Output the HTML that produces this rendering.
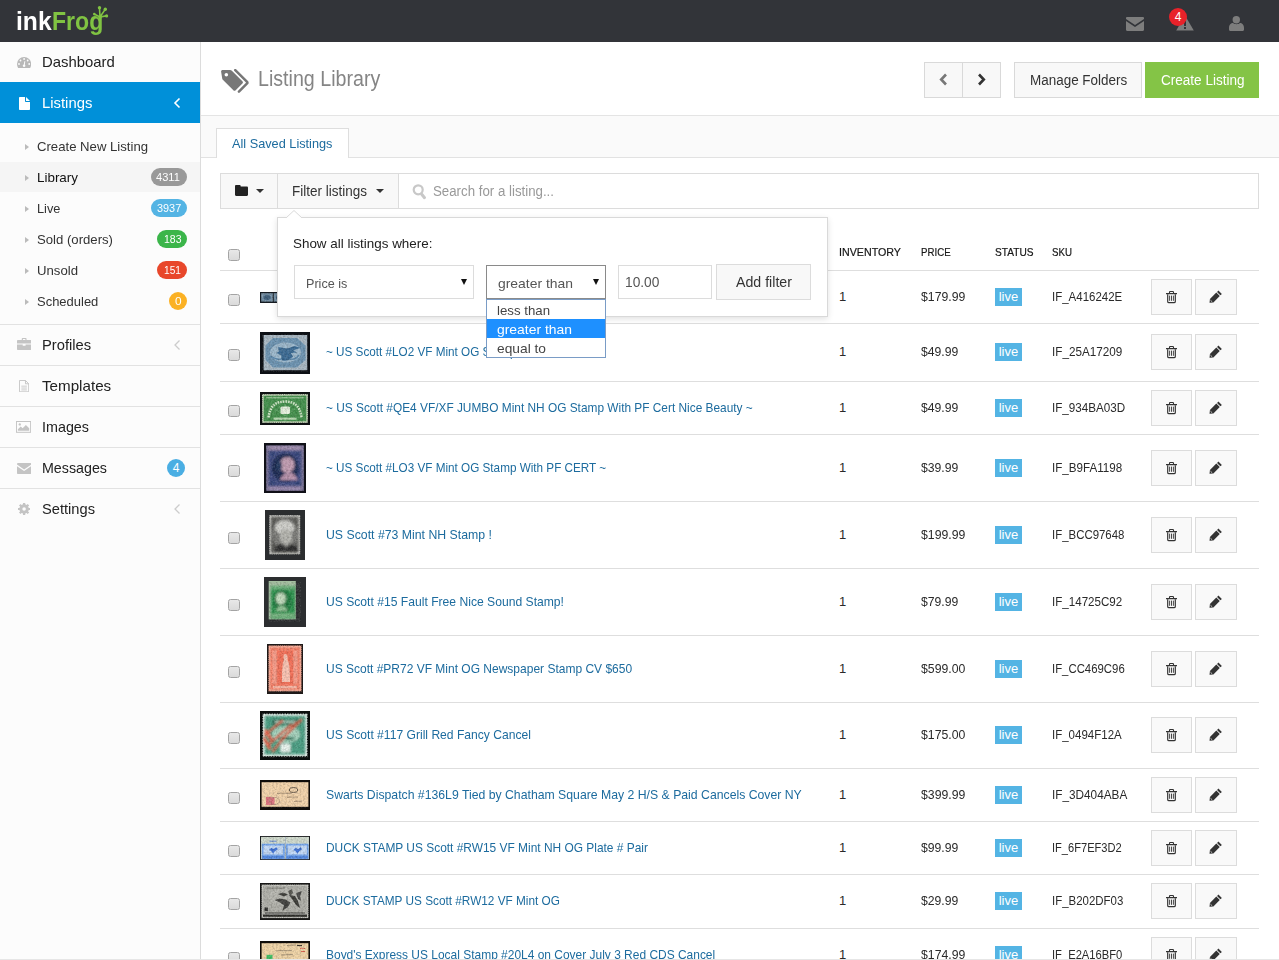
<!DOCTYPE html>
<html lang="en"><head><meta charset="utf-8"><title>inkFrog - Listing Library</title>
<style>
*{box-sizing:border-box}
html,body{margin:0;padding:0}
body{width:1279px;height:960px;overflow:hidden;background:#fff;font-family:"Liberation Sans",sans-serif;font-size:13px;color:#333;position:relative}
a{text-decoration:none;color:#1c6b9e}
#top{position:absolute;left:0;top:0;width:1279px;height:42px;background:#323439}
#logo{position:absolute;left:16.400px;top:5.500px;font-size:25px;font-weight:bold;line-height:30px;color:#fff;white-space:nowrap}
#logo b{color:#80c342}
#foot{position:absolute;left:91px;top:5px}
.ticon{position:absolute}
#tbadge{position:absolute;left:1169px;top:8px;width:18px;height:18px;border-radius:9px;background:#e8222a;color:#fff;font-size:12px;line-height:18px;text-align:center}
#side{position:absolute;left:0;top:42px;width:201px;height:918px;background:#fcfcfc;border-right:1px solid #dcdcdc}
.mi{position:absolute;left:0;width:200px;height:41px;border-top:1px solid #e2e2e2;font-size:14.5px;line-height:40px;color:#222;padding-left:42px}
.mi svg{position:absolute}
.mi.act{background:#0090d9;color:#fff;border-top:0}
.chev{position:absolute;left:173px;top:14px}
.sub{position:absolute;left:0;width:200px;height:31px;font-size:13px;line-height:31px;color:#333;padding-left:37px}
.sub:before{content:"";position:absolute;left:25px;top:12.500px;border-left:4px solid #bbb;border-top:3.5px solid transparent;border-bottom:3.5px solid transparent}
.sub.on{background:#f5f5f5;color:#111;height:30px}
.bdg{position:absolute;right:13px;top:6px;height:18px;border-radius:9px;color:#fff;font-size:11.5px;line-height:18px;text-align:left}
#main{position:absolute;left:201px;top:42px;width:1078px;height:918px}
#ptitle{position:absolute;left:57px;top:20px;font-size:22.5px;line-height:33px;color:#858585;white-space:nowrap}
#band{position:absolute;left:0;top:73px;width:1078px;height:43px;background:#fafafa;border-top:1px solid #e4e4e4;border-bottom:1px solid #e2e2e2}
#tab{position:absolute;left:15px;top:12px;width:133px;height:30px;background:#fff;border:1px solid #dedede;border-bottom:0;font-size:13px;line-height:30px;padding-left:15px;color:#1c6b9e}
.hbtn{position:absolute;top:20px;height:36px;border:1px solid #d9d9d9;background:#f8f8f8;font-size:14px;line-height:34px;text-align:center;color:#333}
#tool{position:absolute;left:19px;top:131px;width:1039px;height:36px;border:1px solid #dcdcdc;background:#fff}
#tool .seg{position:absolute;top:0;height:34px;background:#f8f8f8;border-right:1px solid #dcdcdc;font-size:14px;line-height:34px;color:#333}
.car{display:inline-block;border-top:4px solid #333;border-left:4px solid transparent;border-right:4px solid transparent;vertical-align:middle}
#tbl{position:absolute;left:220px;top:0;width:1039px}
#thead{position:absolute;left:220px;top:232px;width:1039px;height:39px}
#thead span.h{position:absolute;top:13px;font-size:11px;line-height:14px;color:#111;-webkit-text-stroke:.2px #222}
.row{position:absolute;left:0;width:1039px;border-top:1px solid #dedede}
.row>*{position:absolute}
.cb{left:8px;width:12px;height:12px;border:1px solid #a4a4a4;border-radius:2.500px;background:linear-gradient(#e8e8e8,#dadada)}
.thumb{display:block;line-height:0}
.ttl{left:106px;font-size:13px;line-height:20px;white-space:nowrap}
.inv{left:619px;line-height:20px;color:#2a2a2a}
.prc{left:701px;line-height:20px;color:#2a2a2a}
.sku{left:832px;line-height:20px;color:#2a2a2a}
.live{left:775px;width:27px;height:18px;background:#54b4e4;color:#fff;font-size:13px;line-height:17px;text-align:center}
.btn{width:41px;height:36px;border:1px solid #dcdcdc;background:#f9f9f9}
.btn svg{position:absolute;left:14px;top:10.500px}
.btn.edit svg{left:13.300px;top:9.700px}
.btn.trash{left:931px}
.btn.edit{left:975px;width:42px}
#pop{position:absolute;left:277px;top:217px;width:551px;height:100px;background:#fff;border:1px solid #d9d9d9;box-shadow:0 2px 6px rgba(0,0,0,.12)}
#pop .lbl{position:absolute;left:15px;top:16px;font-size:13px;line-height:20px;color:#222}
.sel{position:absolute;height:34px;border:1px solid #dcdcdc;background:#fff;font-size:13.5px;line-height:35px;color:#555;padding-left:11px}
.sel i{position:absolute;right:6.500px;top:12.500px;border-top:6.500px solid #111;border-left:3px solid transparent;border-right:3px solid transparent}
#dd{position:absolute;left:486px;top:299px;width:120px;height:59px;background:#fff;border:1px solid #7a9cc6;font-size:13.5px;color:#444}
#dd div{height:19px;line-height:21px;padding-left:10px}
#dd div.hl{background:#1e90ff;color:#fff}

span[id]{display:inline-block;transform-origin:0 50%;white-space:nowrap}

</style></head>
<body>
<svg width="0" height="0" style="position:absolute"><defs><filter id="nzd" x="0" y="0" width="100%" height="100%"><feTurbulence type="fractalNoise" baseFrequency=".55" numOctaves="2" seed="4"/><feColorMatrix type="matrix" values="0 0 0 0 0 0 0 0 0 0 0 0 0 0 0 0 0 0 2.400 -.9"/></filter><filter id="nzl" x="0" y="0" width="100%" height="100%"><feTurbulence type="fractalNoise" baseFrequency=".6" numOctaves="2" seed="11"/><feColorMatrix type="matrix" values="0 0 0 0 1 0 0 0 0 1 0 0 0 0 1 0 0 0 2.400 -.9"/></filter></defs></svg>
<div id="top">
 <div id="logo"><span id="lg1" style="transform:scaleX(0.985)">ink</span><b style="position:absolute;left:35.400px;top:0"><span id="lg2" style="transform:scaleX(0.922)">Frog</span></b></div>
 <svg id="foot" width="20" height="22" viewBox="0 0 20 22"><g stroke="#80c342" stroke-width="1.600" stroke-linecap="round" fill="none"><path d="M9 12L3.600 9.300M9 12L8.500 3.200M9 12L14 4.600M9 12L15.200 10.900"/></g><g fill="#80c342"><circle cx="3.300" cy="9.100" r="1.300"/><circle cx="8.500" cy="2.800" r="1.700"/><circle cx="14.300" cy="4.200" r="1.700"/><circle cx="15.600" cy="10.900" r="1.600"/><circle cx="9" cy="12.200" r="1.600"/></g></svg>
 <svg class="ticon" style="left:1126px;top:17px" width="18" height="14" viewBox="0 0 18 14"><path d="M0 1.2C0 .5.5 0 1.2 0h15.6c.7 0 1.2.5 1.2 1.2V2L9 8 0 2zM0 4l9 6 9-6v8.8c0 .7-.5 1.2-1.2 1.2H1.200C.5 14 0 13.500 0 12.800z" fill="#7d7d7d"/></svg>
 <svg class="ticon" style="left:1176px;top:15px" width="18" height="16" viewBox="0 0 18 16"><path d="M9 .5L17.800 15.500H.2z" fill="#7d7d7d"/><path d="M8 6h2v5H8zM8 12h2v2H8z" fill="#323439"/></svg>
 <div id="tbadge">4</div>
 <svg class="ticon" style="left:1229px;top:15px" width="15" height="16" viewBox="0 0 15 16"><circle cx="7.300" cy="4.800" r="3.700" fill="#7d7d7d"/><path d="M0 13c0-3.500 2-5 4-5 1 .8 2 1.200 3.500 1.200S10 8.800 11 8c2 0 4 1.500 4 5v1.500c0 .9-.6 1.500-1.500 1.500h-12C.6 16 0 15.400 0 14.500z" fill="#7d7d7d"/></svg>
</div>
<div id="side">
 <div class="mi" style="top:0;border-top:0">
  <svg style="left:17px;top:15px" width="14.200" height="11.200" viewBox="0 0 14.200 11.200"><path d="M7.100 0A7.100 7.100 0 0 0 0 7.100c0 1.500.4 2.900 1.200 4.100h11.800c.8-1.200 1.200-2.600 1.200-4.100A7.100 7.100 0 0 0 7.100 0z" fill="#b9b9b9"/><g fill="#fcfcfc"><circle cx="7.100" cy="2" r=".9"/><circle cx="3.500" cy="3.500" r=".9"/><circle cx="10.700" cy="3.500" r=".9"/><circle cx="2" cy="7" r=".9"/><circle cx="12.200" cy="7" r=".9"/><circle cx="7.100" cy="8.800" r="1.300"/></g><path d="M7.800 4.300L7.200 8.500" stroke="#fcfcfc" stroke-width="1"/></svg><span id="m_dash" style="transform:scaleX(1.026)">Dashboard</span></div>
 <div class="mi act" style="top:40px;height:41px;line-height:42px">
  <svg style="left:19px;top:15px" width="11" height="13" viewBox="0 0 11 13"><path d="M0 .8C0 .3.300 0 .8 0H6v4.200c0 .5.300.8.800.8H11v7.200c0 .5-.300.800-.8.800H.8C.3 13 0 12.700 0 12.200zM7 0l4 4H7z" fill="#fff"/></svg><span id="m_list" style="transform:scaleX(1.023)">Listings</span>
  <svg class="chev" style="top:15px" width="8" height="12" viewBox="0 0 8 12"><path d="M6.500 1.500L2 6l4.500 4.500" stroke="#fff" stroke-width="1.600" fill="none"/></svg></div>
 <div class="sub" style="top:89px"><span id="s_cnl" style="transform:scaleX(1.011)">Create New Listing</span></div>
 <div class="sub on" style="top:120px"><span id="s_lib" style="transform:scaleX(1.031)">Library</span><span class="bdg" style="background:#999;width:36px;padding-left:5.300px"><span id="bd1" style="transform:scaleX(0.962)">4311</span></span></div>
 <div class="sub" style="top:151px"><span id="s_live" style="transform:scaleX(0.981)">Live</span><span class="bdg" style="background:#54b4e4;width:36px;padding-left:5.600px"><span id="bd2" style="transform:scaleX(0.946)">3937</span></span></div>
 <div class="sub" style="top:182px"><span id="s_sold" style="transform:scaleX(1.011)">Sold (orders)</span><span class="bdg" style="background:#3bb54a;width:30px;padding-left:6.600px"><span id="bd3" style="transform:scaleX(0.912)">183</span></span></div>
 <div class="sub" style="top:213px"><span id="s_uns" style="transform:scaleX(1.013)">Unsold</span><span class="bdg" style="background:#e8472b;width:30px;padding-left:6.600px"><span id="bd4" style="transform:scaleX(0.881)">151</span></span></div>
 <div class="sub" style="top:244px"><span id="s_sch" style="transform:scaleX(0.998)">Scheduled</span><span class="bdg" style="background:#fbb124;width:18px;padding-left:5.600px"><span id="bd5" style="transform:scaleX(1.03)">0</span></span></div>
 <div class="mi" style="top:282px">
  <svg style="left:17px;top:13px" width="14.300" height="12" viewBox="0 0 15 13" preserveAspectRatio="none"><path d="M5 2.200V.8C5 .3 5.300 0 5.800 0h3.400c.5 0 .8.300.8.800v1.400h4.200c.5 0 .8.300.8.800V6H0V3c0-.5.300-.8.800-.8zM6.200 1.200v1h2.600v-1zM0 7h6v1.300h3V7h6v5.200c0 .5-.300.800-.8.800H.8C.3 13 0 12.700 0 12.200z" fill="#c4c4c4"/></svg><span id="m_prof" style="transform:scaleX(1.017)">Profiles</span>
  <svg class="chev" width="8" height="12" viewBox="0 0 8 12"><path d="M6.500 1.500L2 6l4.500 4.500" stroke="#ccc" stroke-width="1.300" fill="none"/></svg></div>
 <div class="mi" style="top:323px">
  <svg style="left:19px;top:13.700px" width="10.200" height="12.300" viewBox="0 0 11 13" preserveAspectRatio="none"><path d="M.5.500h6.500L10.500 4v8.500H.5z M7 .5V4h3.500" stroke="#c4c4c4" stroke-width="1" fill="none"/><path d="M2.500 6.500h6M2.500 8.500h6M2.500 10.500h6" stroke="#c4c4c4" stroke-width=".9"/></svg><span id="m_tmpl" style="transform:scaleX(1.047)">Templates</span></div>
 <div class="mi" style="top:364px">
  <svg style="left:16px;top:14px" width="15.100" height="11.800" viewBox="0 0 16 12" preserveAspectRatio="none"><rect x=".5" y=".5" width="15" height="11" fill="none" stroke="#c4c4c4"/><path d="M2 10V8.500L5 5.500l2 2L10.500 4 14 7.500V10z" fill="#c4c4c4"/><circle cx="4" cy="3.500" r="1.200" fill="#c4c4c4"/></svg><span id="m_img" style="transform:scaleX(0.988)">Images</span></div>
 <div class="mi" style="top:405px">
  <svg style="left:17px;top:15px" width="14.200" height="11" viewBox="0 0 15 11" preserveAspectRatio="none"><path d="M0 1C0 .4.400 0 1 0h13c.6 0 1 .4 1 1v.6L7.500 6.500 0 1.600zM0 3.200l7.500 4.900L15 3.200V10c0 .6-.4 1-1 1H1c-.6 0-1-.4-1-1z" fill="#c4c4c4"/></svg><span id="m_msg" style="transform:scaleX(0.983)">Messages</span>
  <span class="bdg" style="background:#4aaee3;right:15px;top:11px;width:18px;font-size:12px;text-align:center">4</span></div>
 <div class="mi" style="top:446px">
  <svg style="left:18px;top:14.200px" width="12.200" height="12" viewBox="0 0 13 13" preserveAspectRatio="none"><circle cx="6.500" cy="6.500" r="3.600" fill="none" stroke="#c4c4c4" stroke-width="3"/><g stroke="#c4c4c4" stroke-width="2.400"><path d="M6.500 0v13M0 6.500h13M1.900 1.900l9.200 9.200M11.100 1.900l-9.200 9.200"/></g><circle cx="6.500" cy="6.500" r="1.900" fill="#fcfcfc"/></svg><span id="m_set" style="transform:scaleX(1.011)">Settings</span>
  <svg class="chev" width="8" height="12" viewBox="0 0 8 12"><path d="M6.500 1.500L2 6l4.500 4.500" stroke="#ccc" stroke-width="1.300" fill="none"/></svg></div>
</div>
<div id="main">
 <svg style="position:absolute;left:19px;top:26.500px" width="30.500" height="25.200" viewBox="0 0 29 24"><path d="M1 2.500C1 1.600 1.600 1 2.500 1H9.500c.8 0 1.400.3 2 .9L21.300 11.700c.7.700.7 1.500 0 2.200l-6.400 6.400c-.7.700-1.500.7-2.200 0L2.900 10.500C2.300 9.900 2 9.300 2 8.500z" fill="#777"/><circle cx="6" cy="5.500" r="1.700" fill="#fff"/><path d="M14.500 1L25.800 12.300c.4.400.4 1 0 1.400L18 21.500" stroke="#777" stroke-width="2.400" fill="none" stroke-linecap="round"/></svg>
 <div id="ptitle"><span id="ptl" style="transform:scaleX(0.873)">Listing Library</span></div>
 <div class="hbtn" style="left:723px;width:39px"><svg style="margin-top:10px" width="9" height="13" viewBox="0 0 9 13"><path d="M7 1.500L2.200 6.500 7 11.500" stroke="#777" stroke-width="2.600" fill="none"/></svg></div>
 <div class="hbtn" style="left:761px;width:39px"><svg style="margin-top:10px" width="9" height="13" viewBox="0 0 9 13"><path d="M2 1.500L6.800 6.500 2 11.500" stroke="#333" stroke-width="2.600" fill="none"/></svg></div>
 <div class="hbtn" style="left:813px;width:128px;text-align:left;padding-left:14.5px"><span id="b_mf" style="transform:scaleX(0.961)">Manage Folders</span></div>
 <div class="hbtn" style="left:944px;width:114px;background:#84c446;border-color:#84c446;color:#fff;text-align:left;padding-left:14.5px"><span id="b_cl" style="transform:scaleX(0.967)">Create Listing</span></div>
 <div id="band"><div id="tab"><span id="tab1" style="transform:scaleX(0.979)">All Saved Listings</span></div></div>
 <div id="tool">
  <div class="seg" style="left:0;width:57px"><svg style="position:absolute;left:14px;top:11px" width="13" height="11" viewBox="0 0 13 11"><path d="M0 1.200C0 .5.500 0 1.200 0h3.300c.7 0 1.200.5 1.200 1.200V1.500h6.100c.7 0 1.200.5 1.200 1.200v7.100c0 .7-.5 1.200-1.200 1.200H1.200C.5 11 0 10.500 0 9.800z" fill="#222"/></svg><span class="car" style="position:absolute;left:35px;top:15px"></span></div>
  <div class="seg" style="left:57px;width:121px;padding-left:14px"><span id="f_fl" style="transform:scaleX(0.964)">Filter listings</span><span class="car" style="position:absolute;left:97.500px;top:15px"></span></div>
  <svg style="position:absolute;left:190.500px;top:9.500px" width="15" height="16" viewBox="0 0 15 16"><circle cx="6.200" cy="5.800" r="4.500" fill="none" stroke="#c8c8c8" stroke-width="2.200"/><path d="M9.700 10.200l2.800 3.500" stroke="#c8c8c8" stroke-width="3" stroke-linecap="round"/></svg>
  <div style="position:absolute;left:212px;top:0;font-size:14px;line-height:34px;color:#999"><span id="f_sr" style="transform:scaleX(0.948)">Search for a listing...</span></div>
 </div>
</div>
<div id="thead">
 <span class="cb" style="position:absolute;top:17px"></span>
 <span class="h" style="left:619px"><span id="h_inv" style="transform:scaleX(0.972)">INVENTORY</span></span>
 <span class="h" style="left:701px"><span id="h_prc" style="transform:scaleX(0.88)">PRICE</span></span>
 <span class="h" style="left:775px"><span id="h_sta" style="transform:scaleX(0.922)">STATUS</span></span>
 <span class="h" style="left:832px"><span id="h_sku" style="transform:scaleX(0.884)">SKU</span></span>
</div>
<div id="tbl">
<div class="row" style="top:270px;height:53px">
 <span class="cb" style="top:23px"></span>
 <span class="thumb" style="left:40px;top:21px;width:50px;height:11px"><svg width="50" height="11" viewBox="0 0 50 11"><filter id="b1" x="-20%" y="-20%" width="140%" height="140%"><feGaussianBlur stdDeviation="0.5"/></filter><rect width="50" height="11" fill="#161c22"/><rect x="1.2" y="1.2" width="11.6" height="8.4" fill="#7590a5"/><rect x="13.8" y="1.2" width="11.6" height="8.4" fill="#7590a5"/><rect x="26.4" y="1.2" width="11" height="8.400" fill="#7590a5"/><rect x="38.400" y="1.200" width="10.400" height="8.400" fill="#7590a5"/><g filter="url(#b1)"><ellipse cx="7" cy="5.4" rx="3.6" ry="2.6" fill="#3f607c"/><ellipse cx="19.6" cy="5.400" rx="3.600" ry="2.600" fill="#3f607c"/><ellipse cx="32" cy="5.400" rx="3.600" ry="2.600" fill="#3f607c"/><ellipse cx="43.500" cy="5.400" rx="3.600" ry="2.600" fill="#3f607c"/></g><rect x="1.2" y="1.2" width="47.6" height="8.6" filter="url(#nzd)" opacity=".16"/><rect x="1.2" y="1.2" width="47.6" height="8.6" filter="url(#nzl)" opacity=".13"/></svg></span>
 <span class="inv" style="top:16px">1</span>
 <span class="prc" style="top:16px"><span id="pr1" style="transform:scaleX(0.943)">$179.99</span></span>
 <span class="live" style="top:17px">live</span>
 <span class="sku" style="top:16px"><span id="sk1" style="transform:scaleX(0.884)">IF_A416242E</span></span>
 <span class="btn trash" style="top:8px"><svg width="11" height="13" viewBox="0 0 11 13"><path d="M3.500 2.300V1.300c0-.5.300-.8.800-.8h2.400c.5 0 .8.300.8.800v1" stroke="#333" stroke-width="1.100" fill="none"/><path d="M.3 2.700h10.400" stroke="#333" stroke-width="1.300" fill="none" stroke-linecap="round"/><path d="M1.700 3.200v7.200c0 .8.500 1.300 1.300 1.300h5c.8 0 1.300-.5 1.300-1.300V3.200" stroke="#333" stroke-width="1.200" fill="none"/><path d="M3.600 4.600v5.200M5.500 4.600v5.200M7.400 4.600v5.200" stroke="#333" stroke-width=".9" fill="none"/></svg></span>
 <span class="btn edit" style="top:8px"><svg width="13.600" height="13.600" viewBox="0 0 13 13"><path d="M9 .5l3.300 3.300-1.300 1.300-3.300-3.300zM7 2.500l3.300 3.300-6.100 6.100-3.700.4.400-3.700z" fill="#333"/><path d="M1.400 9.700l1.700 1.700" stroke="#f9f9f9" stroke-width=".7"/><path d="M8.300 2.500l2 2" stroke="#777" stroke-width=".5"/></svg></span>
</div>
<div class="row" style="top:323px;height:58px">
 <span class="cb" style="top:25px"></span>
 <span class="thumb" style="left:40px;top:8px;width:50px;height:42px"><svg width="50" height="42" viewBox="0 0 50 42"><filter id="b2" x="-20%" y="-20%" width="140%" height="140%"><feGaussianBlur stdDeviation="0.7"/></filter><clipPath id="c2"><rect x="3.6" y="3" width="43.6" height="35.2"/></clipPath><rect width="50" height="42" fill="#0d1015"/><rect x="3.600" y="3" width="43.600" height="35.200" fill="#a9b8c3"/><g filter="url(#b2)" clip-path="url(#c2)"><path d="M13 6h24l8.500 7.500v14.500l-8.500 7.500H13l-7.500-7.500V13.500z" fill="#6c93b1"/><ellipse cx="25.500" cy="20.500" rx="15.500" ry="10" fill="#9cb8cc"/><path d="M18 15l9 1.500 8-2.500 5 2-7 2.500 4 2-6 .5 2 3.500-3 3-5 1.500-4-1 .5-4.500-5-2.500 2.500-1.500z" fill="#3a6a93"/><path d="M10 24c5 3 8 4 12 3M30 27c4 1 7-1 9-4" stroke="#5a86a9" stroke-width="1.500" fill="none"/></g><rect x="2" y="2" width="46" height="38" filter="url(#nzd)" opacity=".16"/><rect x="2" y="2" width="46" height="38" filter="url(#nzl)" opacity=".13"/></svg></span>
 <a class="ttl" style="top:18px"><span id="tt2" style="transform:scaleX(0.901)">~ US Scott #LO2 VF Mint OG Stamp With PF CERT ~</span></a>
 <span class="inv" style="top:18px">1</span>
 <span class="prc" style="top:18px"><span id="pr2" style="transform:scaleX(0.938)">$49.99</span></span>
 <span class="live" style="top:19px">live</span>
 <span class="sku" style="top:18px"><span id="sk2" style="transform:scaleX(0.9)">IF_25A17209</span></span>
 <span class="btn trash" style="top:10px"><svg width="11" height="13" viewBox="0 0 11 13"><path d="M3.500 2.300V1.300c0-.5.300-.8.800-.8h2.400c.5 0 .8.300.8.800v1" stroke="#333" stroke-width="1.100" fill="none"/><path d="M.3 2.700h10.400" stroke="#333" stroke-width="1.300" fill="none" stroke-linecap="round"/><path d="M1.700 3.200v7.200c0 .8.500 1.300 1.300 1.300h5c.8 0 1.300-.5 1.300-1.300V3.200" stroke="#333" stroke-width="1.200" fill="none"/><path d="M3.600 4.600v5.200M5.500 4.600v5.200M7.400 4.600v5.200" stroke="#333" stroke-width=".9" fill="none"/></svg></span>
 <span class="btn edit" style="top:10px"><svg width="13.600" height="13.600" viewBox="0 0 13 13"><path d="M9 .5l3.300 3.300-1.300 1.300-3.300-3.300zM7 2.500l3.300 3.300-6.100 6.100-3.700.4.400-3.700z" fill="#333"/><path d="M1.400 9.700l1.700 1.700" stroke="#f9f9f9" stroke-width=".7"/><path d="M8.300 2.500l2 2" stroke="#777" stroke-width=".5"/></svg></span>
</div>
<div class="row" style="top:381px;height:53px">
 <span class="cb" style="top:23px"></span>
 <span class="thumb" style="left:40px;top:10px;width:50px;height:33px"><svg width="50" height="33" viewBox="0 0 50 33"><filter id="b3" x="-20%" y="-20%" width="140%" height="140%"><feGaussianBlur stdDeviation="0.55"/></filter><rect width="50" height="33" fill="#0f1213"/><rect x="2" y="2" width="46" height="29" fill="#c3d4b6" stroke="#0f1213" stroke-width=".8" stroke-dasharray="1 1.100"/><rect x="3.700" y="3.700" width="42.600" height="25.600" fill="#43904b"/><g filter="url(#b3)"><rect x="6" y="5" width="38" height="1.400" fill="#8fc08e"/><path d="M8.500 25.500C10 13.500 16 9.500 25 9.500s15 4 16.500 16" stroke="#cfe6c6" stroke-width="2.600" fill="none" stroke-dasharray="1.700 .9"/><path d="M25 24l-10-7M25 24l-6-10M25 24V12M25 24l6-10M25 24l10-7" stroke="#6fb072" stroke-width=".7"/><rect x="20.500" y="14.500" width="9.500" height="7.500" rx="1.500" fill="#e6f2de"/><rect x="13.500" y="25.600" width="23" height="2.200" fill="#b5d8ae"/></g><rect x="2" y="2" width="46" height="29" filter="url(#nzd)" opacity=".16"/><rect x="2" y="2" width="46" height="29" filter="url(#nzl)" opacity=".13"/></svg></span>
 <a class="ttl" style="top:16px"><span id="tt3" style="transform:scaleX(0.913)">~ US Scott #QE4 VF/XF JUMBO Mint NH OG Stamp With PF Cert Nice Beauty ~</span></a>
 <span class="inv" style="top:16px">1</span>
 <span class="prc" style="top:16px"><span id="pr3" style="transform:scaleX(0.938)">$49.99</span></span>
 <span class="live" style="top:17px">live</span>
 <span class="sku" style="top:16px"><span id="sk3" style="transform:scaleX(0.897)">IF_934BA03D</span></span>
 <span class="btn trash" style="top:8px"><svg width="11" height="13" viewBox="0 0 11 13"><path d="M3.500 2.300V1.300c0-.5.300-.8.800-.8h2.400c.5 0 .8.300.8.800v1" stroke="#333" stroke-width="1.100" fill="none"/><path d="M.3 2.700h10.400" stroke="#333" stroke-width="1.300" fill="none" stroke-linecap="round"/><path d="M1.700 3.200v7.200c0 .8.500 1.300 1.300 1.300h5c.8 0 1.300-.5 1.300-1.300V3.200" stroke="#333" stroke-width="1.200" fill="none"/><path d="M3.600 4.600v5.200M5.500 4.600v5.200M7.400 4.600v5.200" stroke="#333" stroke-width=".9" fill="none"/></svg></span>
 <span class="btn edit" style="top:8px"><svg width="13.600" height="13.600" viewBox="0 0 13 13"><path d="M9 .5l3.300 3.300-1.300 1.300-3.300-3.300zM7 2.500l3.300 3.300-6.100 6.100-3.700.4.400-3.700z" fill="#333"/><path d="M1.400 9.700l1.700 1.700" stroke="#f9f9f9" stroke-width=".7"/><path d="M8.300 2.500l2 2" stroke="#777" stroke-width=".5"/></svg></span>
</div>
<div class="row" style="top:434px;height:67px">
 <span class="cb" style="top:30px"></span>
 <span class="thumb" style="left:44px;top:8px;width:42px;height:50px"><svg width="42" height="50" viewBox="0 0 42 50"><filter id="b4" x="-20%" y="-20%" width="140%" height="140%"><feGaussianBlur stdDeviation="0.8"/></filter><clipPath id="c4"><rect x="2.2" y="2.4" width="37.6" height="45.4"/></clipPath><rect width="42" height="50" fill="#101018"/><rect x="2.200" y="2.400" width="37.600" height="45.400" fill="#7d7398"/><g clip-path="url(#c4)"><g filter="url(#b4)"><rect x="4.500" y="7.500" width="33" height="36" fill="#3f4b82"/><rect x="5" y="3.400" width="32" height="3.200" fill="#a793b3"/><rect x="5" y="43.800" width="32" height="3" fill="#a08fb2"/><ellipse cx="21.200" cy="24.800" rx="13.600" ry="14.200" fill="#1c2c53"/><ellipse cx="23.200" cy="22" rx="7.400" ry="8" fill="#c09bb0"/><path d="M16 37c2-6 8-9 14-6l4 6z" fill="#b892ab"/><ellipse cx="15.200" cy="23" rx="2.600" ry="6" fill="#24375f"/><circle cx="8.500" cy="11" r="2.200" fill="#2e3f73"/><circle cx="33.500" cy="11" r="2.200" fill="#2e3f73"/><circle cx="8.500" cy="40" r="2.200" fill="#2e3f73"/><circle cx="33.500" cy="40" r="2.200" fill="#2e3f73"/></g></g><rect x="2" y="2" width="38" height="46" filter="url(#nzd)" opacity=".16"/><rect x="2" y="2" width="38" height="46" filter="url(#nzl)" opacity=".13"/></svg></span>
 <a class="ttl" style="top:23px"><span id="tt4" style="transform:scaleX(0.901)">~ US Scott #LO3 VF Mint OG Stamp With PF CERT ~</span></a>
 <span class="inv" style="top:23px">1</span>
 <span class="prc" style="top:23px"><span id="pr4" style="transform:scaleX(0.938)">$39.99</span></span>
 <span class="live" style="top:24px">live</span>
 <span class="sku" style="top:23px"><span id="sk4" style="transform:scaleX(0.895)">IF_B9FA1198</span></span>
 <span class="btn trash" style="top:15px"><svg width="11" height="13" viewBox="0 0 11 13"><path d="M3.500 2.300V1.300c0-.5.300-.8.800-.8h2.400c.5 0 .8.300.8.800v1" stroke="#333" stroke-width="1.100" fill="none"/><path d="M.3 2.700h10.400" stroke="#333" stroke-width="1.300" fill="none" stroke-linecap="round"/><path d="M1.700 3.200v7.200c0 .8.500 1.300 1.300 1.300h5c.8 0 1.300-.5 1.300-1.300V3.200" stroke="#333" stroke-width="1.200" fill="none"/><path d="M3.600 4.600v5.200M5.500 4.600v5.200M7.400 4.600v5.200" stroke="#333" stroke-width=".9" fill="none"/></svg></span>
 <span class="btn edit" style="top:15px"><svg width="13.600" height="13.600" viewBox="0 0 13 13"><path d="M9 .5l3.300 3.300-1.300 1.300-3.300-3.300zM7 2.500l3.300 3.300-6.100 6.100-3.700.4.400-3.700z" fill="#333"/><path d="M1.400 9.700l1.700 1.700" stroke="#f9f9f9" stroke-width=".7"/><path d="M8.300 2.500l2 2" stroke="#777" stroke-width=".5"/></svg></span>
</div>
<div class="row" style="top:501px;height:67px">
 <span class="cb" style="top:30px"></span>
 <span class="thumb" style="left:45px;top:8px;width:40px;height:50px"><svg width="40" height="50" viewBox="0 0 40 50"><filter id="b5" x="-20%" y="-20%" width="140%" height="140%"><feGaussianBlur stdDeviation="0.8"/></filter><clipPath id="c5"><rect x="4.2" y="5" width="31" height="39.4"/></clipPath><rect width="40" height="50" fill="#2b2d2f"/><rect x="4.200" y="5" width="31" height="39.400" fill="#c9c9c4" stroke="#2b2d2f" stroke-width=".9" stroke-dasharray="1 1.200"/><g clip-path="url(#c5)"><g filter="url(#b5)"><rect x="6" y="6.800" width="27.400" height="35.800" fill="#5a5a57"/><ellipse cx="20" cy="24" rx="12.500" ry="16" fill="#7c7c78"/><ellipse cx="19.600" cy="17.500" rx="9.600" ry="7" fill="#cfcfca"/><ellipse cx="21" cy="27" rx="6.200" ry="8" fill="#b3b3ad"/><path d="M9 42c1-7 5-9 9-8l3 4 4-4c5 0 8 3 8 8z" fill="#2f2f2e"/></g></g><rect x="5" y="5" width="30" height="40" filter="url(#nzd)" opacity=".16"/><rect x="5" y="5" width="30" height="40" filter="url(#nzl)" opacity=".13"/></svg></span>
 <a class="ttl" style="top:23px"><span id="tt5" style="transform:scaleX(0.945)">US Scott #73 Mint NH Stamp !</span></a>
 <span class="inv" style="top:23px">1</span>
 <span class="prc" style="top:23px"><span id="pr5" style="transform:scaleX(0.943)">$199.99</span></span>
 <span class="live" style="top:24px">live</span>
 <span class="sku" style="top:23px"><span id="sk5" style="transform:scaleX(0.879)">IF_BCC97648</span></span>
 <span class="btn trash" style="top:15px"><svg width="11" height="13" viewBox="0 0 11 13"><path d="M3.500 2.300V1.300c0-.5.300-.8.800-.8h2.400c.5 0 .8.300.8.800v1" stroke="#333" stroke-width="1.100" fill="none"/><path d="M.3 2.700h10.400" stroke="#333" stroke-width="1.300" fill="none" stroke-linecap="round"/><path d="M1.700 3.200v7.200c0 .8.500 1.300 1.300 1.300h5c.8 0 1.300-.5 1.300-1.300V3.200" stroke="#333" stroke-width="1.200" fill="none"/><path d="M3.600 4.600v5.200M5.500 4.600v5.200M7.400 4.600v5.200" stroke="#333" stroke-width=".9" fill="none"/></svg></span>
 <span class="btn edit" style="top:15px"><svg width="13.600" height="13.600" viewBox="0 0 13 13"><path d="M9 .5l3.300 3.300-1.300 1.300-3.300-3.300zM7 2.500l3.300 3.300-6.100 6.100-3.700.4.400-3.700z" fill="#333"/><path d="M1.400 9.700l1.700 1.700" stroke="#f9f9f9" stroke-width=".7"/><path d="M8.300 2.500l2 2" stroke="#777" stroke-width=".5"/></svg></span>
</div>
<div class="row" style="top:568px;height:67px">
 <span class="cb" style="top:30px"></span>
 <span class="thumb" style="left:44px;top:8px;width:42px;height:50px"><svg width="42" height="50" viewBox="0 0 42 50"><filter id="b6" x="-20%" y="-20%" width="140%" height="140%"><feGaussianBlur stdDeviation="0.8"/></filter><clipPath id="c6"><rect x="4.7" y="4" width="27.1" height="38.4"/></clipPath><rect width="42" height="50" fill="#2c2e30"/><rect x="4.700" y="4" width="27.100" height="38.400" fill="#a3bd9f"/><g clip-path="url(#c6)"><g filter="url(#b6)"><rect x="7" y="9" width="24.200" height="32.500" fill="#2f9550"/><rect x="8" y="9.500" width="22" height="3" fill="#6fb37e"/><ellipse cx="18.500" cy="24" rx="9.500" ry="11.500" fill="#217a40"/><ellipse cx="16.800" cy="21.500" rx="5" ry="6" fill="#c2dcbd"/><path d="M12 34c1-5 5-6 8-5l4 5z" fill="#93c596"/><rect x="8" y="36.800" width="22" height="3" fill="#86bf8e"/></g></g><rect x="5" y="5" width="32" height="40" filter="url(#nzd)" opacity=".16"/><rect x="5" y="5" width="32" height="40" filter="url(#nzl)" opacity=".13"/></svg></span>
 <a class="ttl" style="top:23px"><span id="tt6" style="transform:scaleX(0.933)">US Scott #15 Fault Free Nice Sound Stamp!</span></a>
 <span class="inv" style="top:23px">1</span>
 <span class="prc" style="top:23px"><span id="pr6" style="transform:scaleX(0.938)">$79.99</span></span>
 <span class="live" style="top:24px">live</span>
 <span class="sku" style="top:23px"><span id="sk6" style="transform:scaleX(0.892)">IF_14725C92</span></span>
 <span class="btn trash" style="top:15px"><svg width="11" height="13" viewBox="0 0 11 13"><path d="M3.500 2.300V1.300c0-.5.300-.8.800-.8h2.400c.5 0 .8.300.8.800v1" stroke="#333" stroke-width="1.100" fill="none"/><path d="M.3 2.700h10.400" stroke="#333" stroke-width="1.300" fill="none" stroke-linecap="round"/><path d="M1.700 3.200v7.200c0 .8.500 1.300 1.300 1.300h5c.8 0 1.300-.5 1.300-1.300V3.200" stroke="#333" stroke-width="1.200" fill="none"/><path d="M3.600 4.600v5.200M5.500 4.600v5.200M7.400 4.600v5.200" stroke="#333" stroke-width=".9" fill="none"/></svg></span>
 <span class="btn edit" style="top:15px"><svg width="13.600" height="13.600" viewBox="0 0 13 13"><path d="M9 .5l3.300 3.300-1.300 1.300-3.300-3.300zM7 2.500l3.300 3.300-6.100 6.100-3.700.4.400-3.700z" fill="#333"/><path d="M1.400 9.700l1.700 1.700" stroke="#f9f9f9" stroke-width=".7"/><path d="M8.300 2.500l2 2" stroke="#777" stroke-width=".5"/></svg></span>
</div>
<div class="row" style="top:635px;height:67px">
 <span class="cb" style="top:30px"></span>
 <span class="thumb" style="left:47px;top:8px;width:36px;height:50px"><svg width="36" height="50" viewBox="0 0 36 50"><filter id="b7" x="-20%" y="-20%" width="140%" height="140%"><feGaussianBlur stdDeviation="0.7"/></filter><clipPath id="c7"><rect x="1.4" y="1.4" width="33.2" height="46"/></clipPath><rect width="36" height="50" fill="#1f1a19"/><rect x="1.400" y="1.400" width="33.200" height="46" fill="#f7a893" stroke="#1f1a19" stroke-width=".7" stroke-dasharray="1 1.100"/><g clip-path="url(#c7)"><g filter="url(#b7)"><rect x="3.400" y="3.600" width="29.200" height="41.800" fill="#f5826b"/><rect x="5.500" y="6.500" width="4" height="33" fill="#f79b88"/><rect x="26.500" y="6.500" width="4" height="33" fill="#f79b88"/><rect x="10.400" y="6.800" width="15.600" height="33.800" fill="#f37058"/><path d="M18 10c2.500 0 3 3 2.500 6 2 3 2.500 9 2.500 22h-8c0-12 .5-19 2-22-.8-3-.5-6 1-6z" fill="#fac3b2"/><rect x="6" y="42" width="24" height="2.400" fill="#f9b6a4"/></g></g><rect x="2" y="2" width="32" height="46" filter="url(#nzd)" opacity=".16"/><rect x="2" y="2" width="32" height="46" filter="url(#nzl)" opacity=".13"/></svg></span>
 <a class="ttl" style="top:23px"><span id="tt7" style="transform:scaleX(0.923)">US Scott #PR72 VF Mint OG Newspaper Stamp CV $650</span></a>
 <span class="inv" style="top:23px">1</span>
 <span class="prc" style="top:23px"><span id="pr7" style="transform:scaleX(0.943)">$599.00</span></span>
 <span class="live" style="top:24px">live</span>
 <span class="sku" style="top:23px"><span id="sk7" style="transform:scaleX(0.875)">IF_CC469C96</span></span>
 <span class="btn trash" style="top:15px"><svg width="11" height="13" viewBox="0 0 11 13"><path d="M3.500 2.300V1.300c0-.5.300-.8.800-.8h2.400c.5 0 .8.300.8.800v1" stroke="#333" stroke-width="1.100" fill="none"/><path d="M.3 2.700h10.400" stroke="#333" stroke-width="1.300" fill="none" stroke-linecap="round"/><path d="M1.700 3.200v7.200c0 .8.500 1.300 1.300 1.300h5c.8 0 1.300-.5 1.300-1.300V3.200" stroke="#333" stroke-width="1.200" fill="none"/><path d="M3.600 4.600v5.200M5.500 4.600v5.200M7.400 4.600v5.200" stroke="#333" stroke-width=".9" fill="none"/></svg></span>
 <span class="btn edit" style="top:15px"><svg width="13.600" height="13.600" viewBox="0 0 13 13"><path d="M9 .5l3.300 3.300-1.300 1.300-3.300-3.300zM7 2.500l3.300 3.300-6.100 6.100-3.700.4.400-3.700z" fill="#333"/><path d="M1.400 9.700l1.700 1.700" stroke="#f9f9f9" stroke-width=".7"/><path d="M8.300 2.500l2 2" stroke="#777" stroke-width=".5"/></svg></span>
</div>
<div class="row" style="top:702px;height:66px">
 <span class="cb" style="top:29px"></span>
 <span class="thumb" style="left:40px;top:8px;width:50px;height:49px"><svg width="50" height="49" viewBox="0 0 50 49"><filter id="b8" x="-20%" y="-20%" width="140%" height="140%"><feGaussianBlur stdDeviation="0.8"/></filter><clipPath id="c8"><rect x="2.5" y="2.6" width="45" height="43"/></clipPath><rect width="50" height="49" fill="#0b0f0e"/><rect x="2.500" y="2.600" width="45" height="43" fill="#e4f1ea" stroke="#0b0f0e" stroke-width="1.200" stroke-dasharray="1.200 1.400"/><g clip-path="url(#c8)"><g filter="url(#b8)"><rect x="4.800" y="5" width="40.400" height="38.400" fill="#4a9d82"/><rect x="12" y="8.600" width="26" height="4.600" fill="#2c6b54"/><rect x="15" y="10" width="20" height="1.800" fill="#b8dccb"/><ellipse cx="26" cy="23.500" rx="14" ry="8.500" fill="#a5d3bd"/><path d="M17 26h18l-2 3H19z" fill="#2f7a60"/><rect x="20.500" y="32.500" width="10" height="8.500" fill="#e9f4ee"/><path d="M6 20l5 8M4.500 28l5 9" stroke="#e66a52" stroke-width="3.400" stroke-linecap="round"/><path d="M8 34L31 14M13 40L36 12M22 28L41 9M5 24L22 10" stroke="#df5a42" stroke-width="2.600" stroke-linecap="round" opacity=".85"/></g></g><rect x="2" y="2" width="46" height="45" filter="url(#nzd)" opacity=".16"/><rect x="2" y="2" width="46" height="45" filter="url(#nzl)" opacity=".13"/></svg></span>
 <a class="ttl" style="top:22px"><span id="tt8" style="transform:scaleX(0.931)">US Scott #117 Grill Red Fancy Cancel</span></a>
 <span class="inv" style="top:22px">1</span>
 <span class="prc" style="top:22px"><span id="pr8" style="transform:scaleX(0.943)">$175.00</span></span>
 <span class="live" style="top:23px">live</span>
 <span class="sku" style="top:22px"><span id="sk8" style="transform:scaleX(0.885)">IF_0494F12A</span></span>
 <span class="btn trash" style="top:14px"><svg width="11" height="13" viewBox="0 0 11 13"><path d="M3.500 2.300V1.300c0-.5.300-.8.800-.8h2.400c.5 0 .8.300.8.800v1" stroke="#333" stroke-width="1.100" fill="none"/><path d="M.3 2.700h10.400" stroke="#333" stroke-width="1.300" fill="none" stroke-linecap="round"/><path d="M1.700 3.200v7.200c0 .8.500 1.300 1.300 1.300h5c.8 0 1.300-.5 1.300-1.300V3.200" stroke="#333" stroke-width="1.200" fill="none"/><path d="M3.600 4.600v5.200M5.500 4.600v5.200M7.400 4.600v5.200" stroke="#333" stroke-width=".9" fill="none"/></svg></span>
 <span class="btn edit" style="top:14px"><svg width="13.600" height="13.600" viewBox="0 0 13 13"><path d="M9 .5l3.300 3.300-1.300 1.300-3.300-3.300zM7 2.500l3.300 3.300-6.100 6.100-3.700.4.400-3.700z" fill="#333"/><path d="M1.400 9.700l1.700 1.700" stroke="#f9f9f9" stroke-width=".7"/><path d="M8.300 2.500l2 2" stroke="#777" stroke-width=".5"/></svg></span>
</div>
<div class="row" style="top:768px;height:53px">
 <span class="cb" style="top:23px"></span>
 <span class="thumb" style="left:40px;top:11px;width:50px;height:30px"><svg width="50" height="30" viewBox="0 0 50 30"><filter id="b9" x="-20%" y="-20%" width="140%" height="140%"><feGaussianBlur stdDeviation="0.5"/></filter><rect width="50" height="30" fill="#100d0a"/><rect x="1.600" y="2.200" width="46.800" height="24.600" fill="#f3d3aa"/><g filter="url(#b9)"><rect x="6" y="17" width="8.500" height="8" fill="#db6f7b"/><ellipse cx="14.500" cy="21" rx="5" ry="3.600" fill="none" stroke="#a9907a" stroke-width=".7"/><ellipse cx="33.500" cy="10" rx="4.200" ry="2.400" fill="none" stroke="#4d4238" stroke-width=".9"/><path d="M17 13.500c5-1 10 .5 15-.5M27 17.500c4-1 8 0 11-.500M34 21.500c3-.5 6 0 8-.500" stroke="#9b8369" stroke-width=".8" fill="none"/></g><rect x="2.5" y="2.5" width="45.0" height="25.0" filter="url(#nzd)" opacity=".16"/><rect x="2.5" y="2.5" width="45.0" height="25.0" filter="url(#nzl)" opacity=".13"/></svg></span>
 <a class="ttl" style="top:16px"><span id="tt9" style="transform:scaleX(0.942)">Swarts Dispatch #136L9 Tied by Chatham Square May 2 H/S &amp; Paid Cancels Cover NY</span></a>
 <span class="inv" style="top:16px">1</span>
 <span class="prc" style="top:16px"><span id="pr9" style="transform:scaleX(0.943)">$399.99</span></span>
 <span class="live" style="top:17px">live</span>
 <span class="sku" style="top:16px"><span id="sk9" style="transform:scaleX(0.906)">IF_3D404ABA</span></span>
 <span class="btn trash" style="top:8px"><svg width="11" height="13" viewBox="0 0 11 13"><path d="M3.500 2.300V1.300c0-.5.300-.8.800-.8h2.400c.5 0 .8.300.8.800v1" stroke="#333" stroke-width="1.100" fill="none"/><path d="M.3 2.700h10.400" stroke="#333" stroke-width="1.300" fill="none" stroke-linecap="round"/><path d="M1.700 3.200v7.200c0 .8.500 1.300 1.300 1.300h5c.8 0 1.300-.5 1.300-1.300V3.200" stroke="#333" stroke-width="1.200" fill="none"/><path d="M3.600 4.600v5.200M5.500 4.600v5.200M7.400 4.600v5.200" stroke="#333" stroke-width=".9" fill="none"/></svg></span>
 <span class="btn edit" style="top:8px"><svg width="13.600" height="13.600" viewBox="0 0 13 13"><path d="M9 .5l3.300 3.300-1.300 1.300-3.300-3.300zM7 2.500l3.300 3.300-6.100 6.100-3.700.4.400-3.700z" fill="#333"/><path d="M1.400 9.700l1.700 1.700" stroke="#f9f9f9" stroke-width=".7"/><path d="M8.300 2.500l2 2" stroke="#777" stroke-width=".5"/></svg></span>
</div>
<div class="row" style="top:821px;height:53px">
 <span class="cb" style="top:23px"></span>
 <span class="thumb" style="left:40px;top:14px;width:50px;height:24px"><svg width="50" height="24" viewBox="0 0 50 24"><filter id="b10" x="-20%" y="-20%" width="140%" height="140%"><feGaussianBlur stdDeviation="0.5"/></filter><rect width="50" height="24" fill="#1c1e20"/><rect x="1" y=".9" width="48" height="22.200" fill="#d0dacd"/><rect x="9.500" y="4.600" width="7" height="1.300" fill="#7a9ad0"/><rect x="1.800" y="7.700" width="23" height="15.400" fill="#72a4ec"/><rect x="26" y="7.700" width="22.600" height="15.400" fill="#72a4ec"/><g filter="url(#b10)"><rect x="3.500" y="9.500" width="19.600" height="9" fill="#c3daf7"/><rect x="27.700" y="9.500" width="19.200" height="9" fill="#c3daf7"/><path d="M9 14l2.500-2.200 2 1.500 2.800-2 1.500 2-3 2-1.600 2.400-2-2.800zM33.300 14l2.500-2.200 2 1.500 2.800-2 1.500 2-3 2-1.600 2.400-2-2.800z" fill="#3d70d4"/><rect x="2.500" y="20" width="21.600" height="2.600" fill="#4f86e0"/><rect x="26.700" y="20" width="21.200" height="2.600" fill="#4f86e0"/></g><rect x="25" y=".9" width=".8" height="22.200" fill="#9fb0bf"/><rect x="1" y="1" width="48" height="22" filter="url(#nzd)" opacity=".16"/><rect x="1" y="1" width="48" height="22" filter="url(#nzl)" opacity=".13"/></svg></span>
 <a class="ttl" style="top:16px"><span id="tt10" style="transform:scaleX(0.917)">DUCK STAMP US Scott #RW15 VF Mint NH OG Plate # Pair</span></a>
 <span class="inv" style="top:16px">1</span>
 <span class="prc" style="top:16px"><span id="pr10" style="transform:scaleX(0.938)">$99.99</span></span>
 <span class="live" style="top:17px">live</span>
 <span class="sku" style="top:16px"><span id="sk10" style="transform:scaleX(0.854)">IF_6F7EF3D2</span></span>
 <span class="btn trash" style="top:8px"><svg width="11" height="13" viewBox="0 0 11 13"><path d="M3.500 2.300V1.300c0-.5.300-.8.800-.8h2.400c.5 0 .8.300.8.800v1" stroke="#333" stroke-width="1.100" fill="none"/><path d="M.3 2.700h10.400" stroke="#333" stroke-width="1.300" fill="none" stroke-linecap="round"/><path d="M1.700 3.200v7.200c0 .8.500 1.300 1.300 1.300h5c.8 0 1.300-.5 1.300-1.300V3.200" stroke="#333" stroke-width="1.200" fill="none"/><path d="M3.600 4.600v5.200M5.500 4.600v5.200M7.400 4.600v5.200" stroke="#333" stroke-width=".9" fill="none"/></svg></span>
 <span class="btn edit" style="top:8px"><svg width="13.600" height="13.600" viewBox="0 0 13 13"><path d="M9 .5l3.300 3.300-1.300 1.300-3.300-3.300zM7 2.500l3.300 3.300-6.100 6.100-3.700.4.400-3.700z" fill="#333"/><path d="M1.400 9.700l1.700 1.700" stroke="#f9f9f9" stroke-width=".7"/><path d="M8.300 2.500l2 2" stroke="#777" stroke-width=".5"/></svg></span>
</div>
<div class="row" style="top:874px;height:54px">
 <span class="cb" style="top:23px"></span>
 <span class="thumb" style="left:40px;top:8px;width:50px;height:37px"><svg width="50" height="37" viewBox="0 0 50 37"><filter id="b11" x="-20%" y="-20%" width="140%" height="140%"><feGaussianBlur stdDeviation="0.7"/></filter><clipPath id="c11"><rect x="1.5" y="1.5" width="47" height="33.6"/></clipPath><rect width="50" height="37" fill="#171716"/><rect x="1.500" y="1.500" width="47" height="33.600" fill="#cbcbc5" stroke="#171716" stroke-width=".6" stroke-dasharray="1 1.100"/><rect x="2.800" y="2.800" width="44.400" height="31" fill="#aeaea7"/><g clip-path="url(#c11)"><g filter="url(#b11)"><ellipse cx="25" cy="14" rx="17" ry="9" fill="#b7b7b0"/><rect x="3" y="31.600" width="44" height="2.200" fill="#2a2a28"/><rect x="5" y="29.300" width="40" height="1.300" fill="#5e5e5a"/><rect x="7" y="4.500" width="18" height="1.400" fill="#8f8f88"/><path d="M18 11l5-1.500 5 2-4 2z" fill="#3c3c39"/><path d="M28 8l4-2 1 4-3 3z" fill="#55554f"/><path d="M14.500 17l5-1.500 6 1 5 3-3 5-5 3 1.500-5-4-3z" fill="#41413e"/><path d="M29 12l6 1 3 5 2 7-4-3-4-6z" fill="#3c3c39"/><path d="M36 10l6-2-2 5 1 5-3-2z" fill="#4a4a46"/><rect x="4.500" y="24.500" width="3.400" height="3.600" fill="#2a2a28"/></g></g><rect x="2" y="2" width="46" height="33" filter="url(#nzd)" opacity=".16"/><rect x="2" y="2" width="46" height="33" filter="url(#nzl)" opacity=".13"/></svg></span>
 <a class="ttl" style="top:16px"><span id="tt11" style="transform:scaleX(0.907)">DUCK STAMP US Scott #RW12 VF Mint OG</span></a>
 <span class="inv" style="top:16px">1</span>
 <span class="prc" style="top:16px"><span id="pr11" style="transform:scaleX(0.938)">$29.99</span></span>
 <span class="live" style="top:17px">live</span>
 <span class="sku" style="top:16px"><span id="sk11" style="transform:scaleX(0.881)">IF_B202DF03</span></span>
 <span class="btn trash" style="top:8px"><svg width="11" height="13" viewBox="0 0 11 13"><path d="M3.500 2.300V1.300c0-.5.300-.8.800-.8h2.400c.5 0 .8.300.8.800v1" stroke="#333" stroke-width="1.100" fill="none"/><path d="M.3 2.700h10.400" stroke="#333" stroke-width="1.300" fill="none" stroke-linecap="round"/><path d="M1.700 3.200v7.200c0 .8.500 1.300 1.300 1.300h5c.8 0 1.300-.5 1.300-1.300V3.200" stroke="#333" stroke-width="1.200" fill="none"/><path d="M3.600 4.600v5.200M5.500 4.600v5.200M7.400 4.600v5.200" stroke="#333" stroke-width=".9" fill="none"/></svg></span>
 <span class="btn edit" style="top:8px"><svg width="13.600" height="13.600" viewBox="0 0 13 13"><path d="M9 .5l3.300 3.300-1.300 1.300-3.300-3.300zM7 2.500l3.300 3.300-6.100 6.100-3.700.4.400-3.700z" fill="#333"/><path d="M1.400 9.700l1.700 1.700" stroke="#f9f9f9" stroke-width=".7"/><path d="M8.300 2.500l2 2" stroke="#777" stroke-width=".5"/></svg></span>
</div>
<div class="row" style="top:928px;height:62px">
 <span class="cb" style="top:23px"></span>
 <span class="thumb" style="left:40px;top:12px;width:50px;height:40px"><svg width="50" height="40" viewBox="0 0 50 40"><filter id="b12" x="-20%" y="-20%" width="140%" height="140%"><feGaussianBlur stdDeviation="0.5"/></filter><rect width="50" height="40" fill="#100d0a"/><rect x="1.600" y="2.200" width="46.800" height="37" fill="#f0d4a6"/><g filter="url(#b12)"><path d="M27 4.500c3-.5 6 0 9-.500M16 10c5-1 10 0 16-.500M21 14c4-.5 8 0 12-.500" stroke="#8b7962" stroke-width=".7" fill="none"/><path d="M37 4.500h5" stroke="#3a3029" stroke-width="1.200"/><path d="M40 7.500c2-.5 3 0 5 0M41 10.500h4" stroke="#d9624f" stroke-width="1" fill="none"/><rect x="6.500" y="13.800" width="6" height="5" fill="#43c266"/></g><rect x="2.5" y="2.5" width="45.0" height="35.0" filter="url(#nzd)" opacity=".16"/><rect x="2.5" y="2.5" width="45.0" height="35.0" filter="url(#nzl)" opacity=".13"/></svg></span>
 <a class="ttl" style="top:16px"><span id="tt12" style="transform:scaleX(0.92)">Boyd's Express US Local Stamp #20L4 on Cover July 3 Red CDS Cancel</span></a>
 <span class="inv" style="top:16px">1</span>
 <span class="prc" style="top:16px"><span id="pr12" style="transform:scaleX(0.943)">$174.99</span></span>
 <span class="live" style="top:17px">live</span>
 <span class="sku" style="top:16px"><span id="sk12" style="transform:scaleX(0.861)">IF_E2A16BF0</span></span>
 <span class="btn trash" style="top:8px"><svg width="11" height="13" viewBox="0 0 11 13"><path d="M3.500 2.300V1.300c0-.5.300-.8.800-.8h2.400c.5 0 .8.300.8.800v1" stroke="#333" stroke-width="1.100" fill="none"/><path d="M.3 2.700h10.400" stroke="#333" stroke-width="1.300" fill="none" stroke-linecap="round"/><path d="M1.700 3.200v7.200c0 .8.500 1.300 1.300 1.300h5c.8 0 1.300-.5 1.300-1.300V3.200" stroke="#333" stroke-width="1.200" fill="none"/><path d="M3.600 4.600v5.200M5.500 4.600v5.200M7.400 4.600v5.200" stroke="#333" stroke-width=".9" fill="none"/></svg></span>
 <span class="btn edit" style="top:8px"><svg width="13.600" height="13.600" viewBox="0 0 13 13"><path d="M9 .5l3.300 3.300-1.300 1.300-3.300-3.300zM7 2.500l3.300 3.300-6.100 6.100-3.700.4.400-3.700z" fill="#333"/><path d="M1.400 9.700l1.700 1.700" stroke="#f9f9f9" stroke-width=".7"/><path d="M8.300 2.500l2 2" stroke="#777" stroke-width=".5"/></svg></span>
</div>
</div>
<div id="pop">
 <svg style="position:absolute;left:8px;top:-8px" width="16" height="8" viewBox="0 0 16 8"><path d="M0 8L8 .5 16 8" fill="#fff" stroke="#d9d9d9"/></svg>
 <div class="lbl"><span id="p_lbl" style="transform:scaleX(1.032)">Show all listings where:</span></div>
 <div class="sel" style="left:16px;top:47px;width:180px"><span id="p_pi" style="transform:scaleX(0.933)">Price is</span><i></i></div>
 <div class="sel" style="left:208px;top:47px;width:120px;border-color:#8a8a8a"><span id="p_gt" style="transform:scaleX(1.03)">greater than</span><i></i></div>
 <div class="sel" style="left:340px;top:47px;width:94px;padding-left:6px;font-size:14.5px;line-height:33px"><span id="p_val" style="transform:scaleX(0.948)">10.00</span></div>
 <div class="sel" style="left:438px;top:46px;width:95px;height:36px;background:#f8f8f8;padding:0 0 0 19px;font-size:14.5px;color:#333;line-height:34px"><span id="p_add" style="transform:scaleX(0.978)">Add filter</span></div>
</div>
<div id="dd"><div><span id="d_lt" style="transform:scaleX(0.981)">less than</span></div><div class="hl"><span id="d_gt" style="transform:scaleX(1.03)">greater than</span></div><div><span id="d_eq" style="transform:scaleX(1.02)">equal to</span></div></div>
<div style="position:absolute;left:0;top:959px;width:1279px;height:1px;background:#e6e6e6"></div>
</body></html>
